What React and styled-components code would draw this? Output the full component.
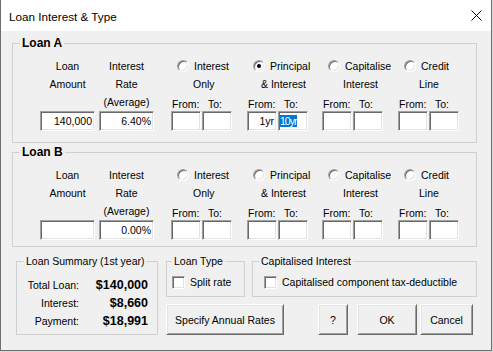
import React from 'react';
import styled, { createGlobalStyle } from 'styled-components';

const Global = createGlobalStyle`
  html, body { margin: 0; padding: 0; background: #d9d9d9; }
  body {
    font-family: "Liberation Sans", Arial, sans-serif;
    font-size: 10.5px;
    color: #000;
  }
  * { box-sizing: border-box; }
`;

const Window = styled.div`
  width: 492px;
  height: 351px;
  display: flex;
  flex-direction: column;
  background: #f0f0f0;
  border: 1px solid #6e6e6e;
  border-top: none;
  overflow: hidden;
`;

const TitleBar = styled.div`
  height: 31px;
  flex-shrink: 0;
  background: #fff;
  display: flex;
  align-items: center;
  justify-content: space-between;
  padding: 0 9px 0 8px;
`;

const Title = styled.div`
  font-size: 11.7px;
  padding-top: 1px;
`;

const Body = styled.div`
  flex: 1;
  display: flex;
  flex-direction: column;
  padding: 5px 0 0 11px;
`;

const Group = styled.fieldset`
  margin: ${p => p.$mt || 0}px 0 0 0;
  padding: 0;
  min-width: 0;
  width: ${p => p.$w}px;
  border: 1px solid #d0d0d0;
`;

const Legend = styled.legend`
  padding: 0 2px;
  margin-left: ${p => p.$ml ?? 7}px;
  line-height: 14px;
  font-size: ${p => (p.$bold ? '12px' : '10.5px')};
  font-weight: ${p => (p.$bold ? 700 : 400)};
`;

const LoanRow = styled.div`
  display: flex;
  padding: 7px 0 ${p => p.$pb}px 27px;
`;

const ValueCols = styled.div`
  display: flex;
  gap: 4px;
`;

const ValueCol = styled.div`
  width: 55px;
  display: flex;
  flex-direction: column;
`;

const Caption = styled.div`
  height: 54px;
  display: flex;
  flex-direction: column;
  align-items: center;
  line-height: 18px;
  white-space: nowrap;
`;

const RepayCol = styled.div`
  width: 61px;
  margin-left: ${p => p.$ml}px;
  display: flex;
  flex-direction: column;
`;

const RadioRow = styled.div`
  display: flex;
  align-items: center;
  height: 18px;
  padding-left: 6px;
  gap: 5px;
  white-space: nowrap;
`;

const Radio = styled.span`
  position: relative;
  flex-shrink: 0;
  width: 12px;
  height: 12px;
  border-radius: 50%;
  background: #fff;
  border: 1px solid;
  border-color: #a0a0a0 #ffffff #ffffff #a0a0a0;
  box-shadow: inset 1px 1px 0 #696969, inset -1px -1px 0 #e3e3e3;
  &::after {
    content: '';
    display: ${p => (p.$on ? 'block' : 'none')};
    position: absolute;
    left: 3px;
    top: 3px;
    width: 4px;
    height: 4px;
    border-radius: 50%;
    background: #000;
  }
`;

const SubLabel = styled.div`
  height: 18px;
  line-height: 18px;
  padding-left: ${p => p.$indent}px;
  white-space: nowrap;
`;

const FromTo = styled.div`
  display: grid;
  grid-template-columns: 31px 30px;
  margin-top: 4px;
  height: 14px;
  line-height: 14px;
  white-space: nowrap;
`;

const FromLabel = styled.span`
  padding-left: 1px;
`;

const ToLabel = styled.span`
  padding-left: 6px;
`;

const Pair = styled.div`
  display: flex;
  gap: 1px;
`;

const Field = styled.div`
  width: ${p => p.$w}px;
  height: 20px;
  background: #fff;
  border-top: 1px solid #a0a0a0;
  border-left: 1px solid #a0a0a0;
  border-right: 1px solid #ffffff;
  border-bottom: 1px solid #ffffff;
  box-shadow: inset 1px 1px 0 #696969, inset -1px -1px 0 #e3e3e3;
  line-height: 18px;
  text-align: ${p => (p.$left ? 'left' : 'right')};
  padding: ${p => (p.$left ? '0 0 0 1px' : '0 2px 0 0')};
  white-space: nowrap;
  overflow: hidden;
`;

const Selected = styled.span`
  background: #0078d7;
  color: #fff;
  letter-spacing: -1px;
  padding-right: 1px;
`;

const Bottom = styled.div`
  display: flex;
  margin-top: 7px;
  padding-left: 4px;
  gap: 8px;
`;

const SummaryGrid = styled.div`
  display: grid;
  grid-template-columns: 62px 69px;
  padding: 8px 0 3px 0;
  line-height: 18px;
`;

const SumLabel = styled.div`
  text-align: right;
`;

const SumValue = styled.div`
  text-align: right;
  font-weight: 700;
  font-size: 12.5px;
`;

const RightCol = styled.div`
  width: 311px;
  display: flex;
  flex-direction: column;
`;

const GroupsRow = styled.div`
  display: flex;
  gap: 7px;
`;

const CheckRow = styled.div`
  display: flex;
  align-items: center;
  height: 16px;
  margin: 6px 0 6px ${p => p.$pl}px;
  gap: 5px;
  white-space: nowrap;
`;

const Check = styled.span`
  width: 13px;
  height: 13px;
  flex-shrink: 0;
  background: #fff;
  border-top: 1px solid #a0a0a0;
  border-left: 1px solid #a0a0a0;
  border-right: 1px solid #ffffff;
  border-bottom: 1px solid #ffffff;
  box-shadow: inset 1px 1px 0 #696969, inset -1px -1px 0 #e3e3e3;
`;

const ButtonRow = styled.div`
  display: flex;
  margin-top: 7px;
`;

const Button = styled.button`
  width: ${p => p.$w}px;
  height: 31px;
  margin-left: ${p => p.$ml || 0}px;
  padding: 0;
  background: #f0f0f0;
  font-family: inherit;
  font-size: 10.5px;
  color: #000;
  border-top: 1px solid #ffffff;
  border-left: 1px solid #ffffff;
  border-right: 1px solid #696969;
  border-bottom: 1px solid #696969;
  box-shadow: inset 1px 1px 0 #e3e3e3, inset -1px -1px 0 #a0a0a0;
  white-space: nowrap;
`;

const CloseIcon = () => (
  <svg width="11" height="11" viewBox="0 0 11 11">
    <path d="M0.5 0.5 L10.5 10.5 M10.5 0.5 L0.5 10.5" stroke="#000" strokeWidth="1" fill="none" />
  </svg>
);

const repayCols = [
  { key: 'io', label: 'Interest', sub: 'Only', indent: 22, ml: 17 },
  { key: 'pi', label: 'Principal', sub: '& Interest', indent: 14, ml: 15 },
  { key: 'ci', label: 'Capitalise', sub: 'Interest', indent: 21, ml: 14 },
  { key: 'cl', label: 'Credit', sub: 'Line', indent: 21, ml: 15 },
];

function LoanSection({ name, amount, rate, selected, from, to, mt, pb }) {
  return (
    <Group $w={465} $mt={mt}>
      <Legend $bold $ml={7}>{name}</Legend>
      <LoanRow $pb={pb}>
        <ValueCols>
          <ValueCol>
            <Caption>
              <span>Loan</span>
              <span>Amount</span>
            </Caption>
            <Field $w={55}>{amount}</Field>
          </ValueCol>
          <ValueCol>
            <Caption>
              <span>Interest</span>
              <span>Rate</span>
              <span>(Average)</span>
            </Caption>
            <Field $w={55}>{rate}</Field>
          </ValueCol>
        </ValueCols>
        {repayCols.map(c => {
          const on = selected === c.key;
          return (
            <RepayCol key={c.key} $ml={c.ml}>
              <RadioRow>
                <Radio $on={on} />
                <span>{c.label}</span>
              </RadioRow>
              <SubLabel $indent={c.indent}>{c.sub}</SubLabel>
              <FromTo>
                <FromLabel>From:</FromLabel>
                <ToLabel>To:</ToLabel>
              </FromTo>
              <Pair>
                <Field $w={30}>{on ? from : ''}</Field>
                <Field $w={30} $left={on}>{on ? <Selected>{to}</Selected> : ''}</Field>
              </Pair>
            </RepayCol>
          );
        })}
      </LoanRow>
    </Group>
  );
}

export default function App() {
  return (
    <>
      <Global />
      <Window>
        <TitleBar>
          <Title>Loan Interest &amp; Type</Title>
          <CloseIcon />
        </TitleBar>
        <Body>
          <LoanSection name="Loan A" amount="140,000" rate="6.40%" selected="pi" from="1yr" to="10yr" mt={0} pb={11} />
          <LoanSection name="Loan B" amount="" rate="0.00%" selected="" mt={2} pb={6} />
          <Bottom>
            <Group $w={142}>
              <Legend $ml={7}>Loan Summary (1st year)</Legend>
              <SummaryGrid>
                <SumLabel>Total Loan:</SumLabel>
                <SumValue>$140,000</SumValue>
                <SumLabel>Interest:</SumLabel>
                <SumValue>$8,660</SumValue>
                <SumLabel>Payment:</SumLabel>
                <SumValue>$18,991</SumValue>
              </SummaryGrid>
            </Group>
            <RightCol>
              <GroupsRow>
                <Group $w={79}>
                  <Legend $ml={5}>Loan Type</Legend>
                  <CheckRow $pl={5}>
                    <Check />
                    <span>Split rate</span>
                  </CheckRow>
                </Group>
                <Group $w={225}>
                  <Legend $ml={6}>Capitalised Interest</Legend>
                  <CheckRow $pl={11}>
                    <Check />
                    <span>Capitalised component tax-deductible</span>
                  </CheckRow>
                </Group>
              </GroupsRow>
              <ButtonRow>
                <Button $w={118}>Specify Annual Rates</Button>
                <Button $w={30} $ml={34}>?</Button>
                <Button $w={60} $ml={9}>OK</Button>
                <Button $w={53} $ml={3}>Cancel</Button>
              </ButtonRow>
            </RightCol>
          </Bottom>
        </Body>
      </Window>
    </>
  );
}
